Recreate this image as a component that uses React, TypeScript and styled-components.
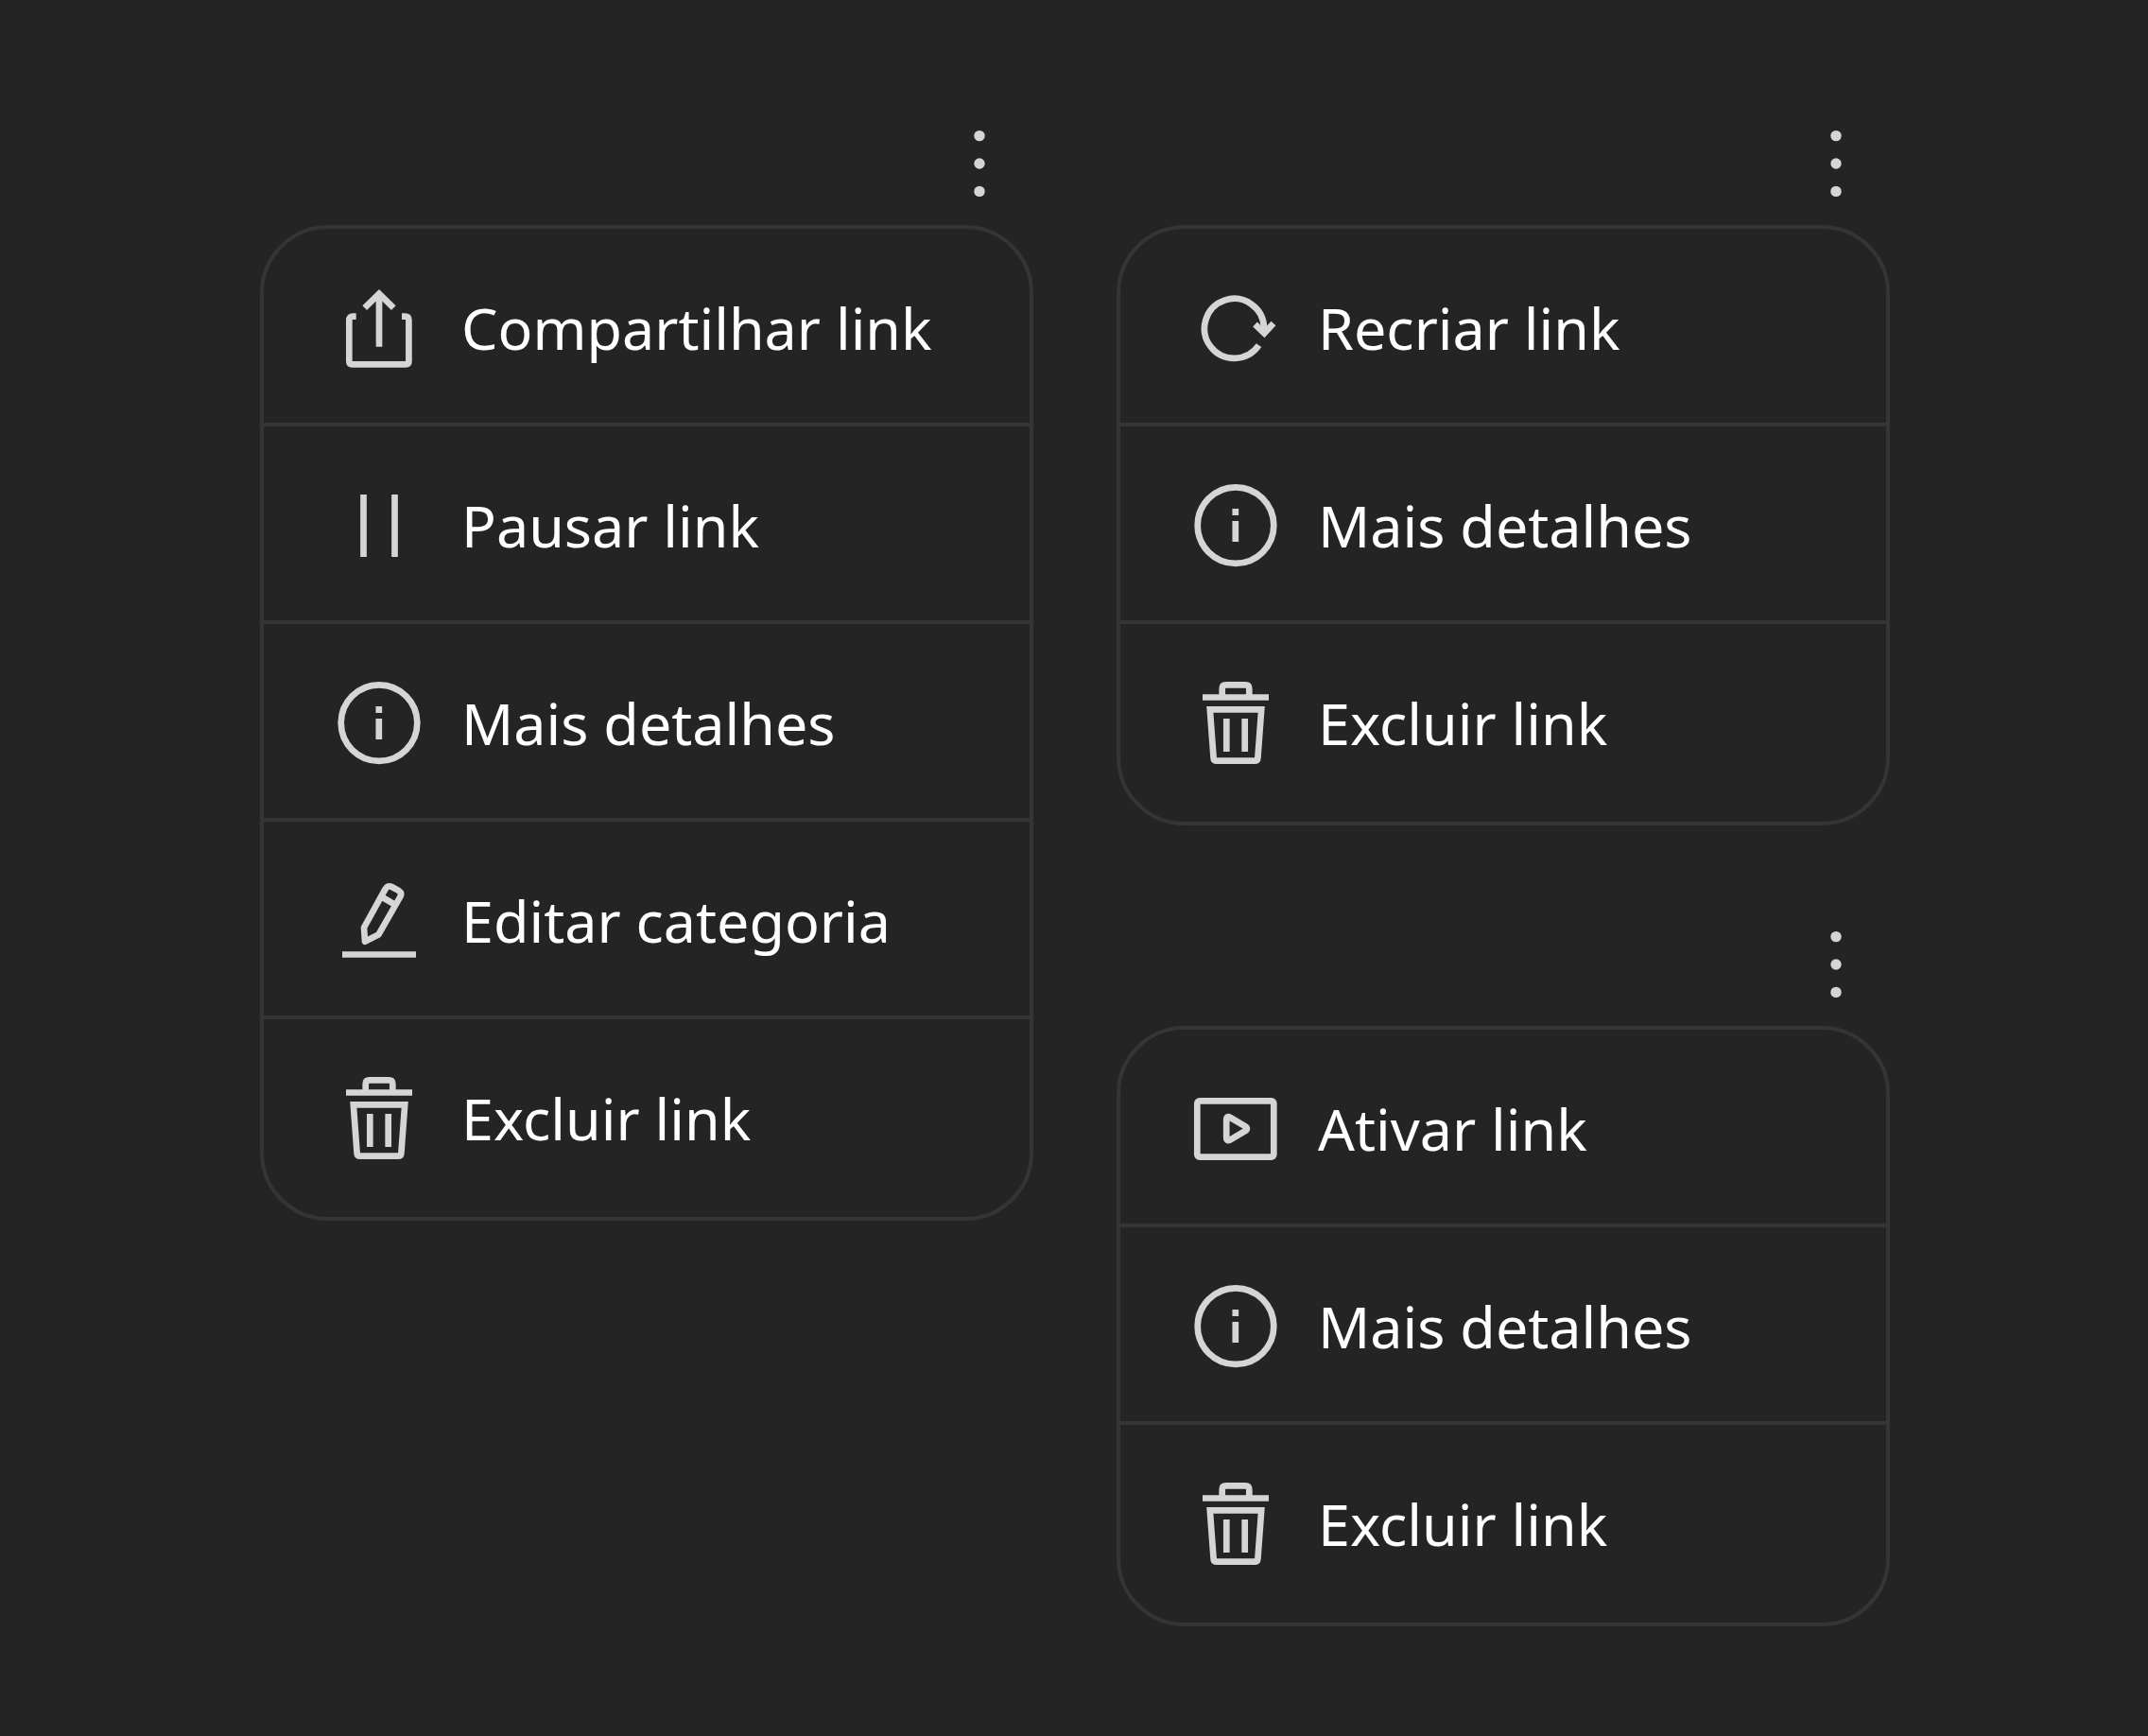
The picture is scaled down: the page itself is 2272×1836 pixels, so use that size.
import React from "react";
import styled, { createGlobalStyle } from "styled-components";

const color = {
  page: "#242424",
  line: "#353535",
  icon: "#d5d5d5",
  text: "#ffffff",
};

const GlobalStyle = createGlobalStyle`
  * {
    box-sizing: border-box;
  }

  body {
    margin: 0;
    background: ${color.page};
    color: ${color.text};
    font-family: "Noto Sans", "Open Sans", sans-serif;
  }
`;

const Page = styled.main`
  display: grid;
  grid-template-columns: repeat(2, minmax(0, 1fr));
  column-gap: 88px;
  align-items: start;
  min-height: 100vh;
  padding: 129px 273px 116px 275px;
`;

const Column = styled.div`
  display: flex;
  flex-direction: column;
  gap: 103px;
`;

const MenuGroup = styled.section`
  display: flex;
  flex-direction: column;
  gap: 21px;
`;

const KebabButton = styled.button`
  align-self: flex-end;
  display: flex;
  width: 88px;
  height: 88px;
  margin: 0 13px 0 0;
  padding: 0;
  border: 0;
  background: none;
  color: ${color.icon};
  cursor: pointer;
`;

const MenuList = styled.ul`
  margin: 0;
  padding: 0;
  list-style: none;
  border: 4px solid ${color.line};
  border-radius: 72px;
  overflow: hidden;
`;

const MenuItem = styled.li`
  &:not(:last-child) {
    box-shadow: inset 0 -4px ${color.line};
  }
`;

const MenuButton = styled.button`
  display: flex;
  align-items: center;
  gap: 34px;
  width: 100%;
  height: 209px;
  padding: 0 70px;
  border: 0;
  background: none;
  color: inherit;
  font: inherit;
  font-size: 61px;
  line-height: 79px;
  text-align: left;
  white-space: nowrap;
  cursor: pointer;
`;

const Icon = styled.svg`
  flex: none;
  width: 105px;
  height: 105px;
  fill: none;
  stroke: ${color.icon};
  stroke-width: 6.7;
`;

const icons = {
  share: (
    <>
      <path d="M27.7 40.6H24.3Q20.3 40.6 20.3 44.6V88Q20.3 91.4 23.7 91.4H80Q83.4 91.4 83.4 88V44.6Q83.4 40.6 79.4 40.6H76" />
      <path d="M52 17V72.7M36.7 31.7L52 16.6L67.3 31.7" />
    </>
  ),
  pause: <path d="M35.5 20V86M68.5 20V86" />,
  info: (
    <>
      <circle cx="52" cy="52.6" r="40.3" />
      <path d="M51.8 35V42M51.8 48V70" />
    </>
  ),
  edit: (
    <>
      <path d="M13 88.5H91" />
      <path
        strokeLinejoin="round"
        d="M36 60L58.6 19.2Q61.3 15 65.5 17L73 21.2Q76.5 23.5 74.3 27.5L51.3 67.6L37 74.7ZM55.5 28L69 35.8"
      />
    </>
  ),
  trash: (
    <>
      <path d="M17 25.5H87M37.7 24V16.5Q37.7 12.4 41.8 12.4H62.2Q66.3 12.4 66.3 16.5V24" />
      <path d="M24.8 38.4H79.2L75.4 89.5Q75.2 92.7 72 92.7H32Q28.8 92.7 28.6 89.5Z" />
      <path d="M42.3 48V83M61.7 48V83" />
    </>
  ),
  recreate: (
    <>
      <path d="M76.5 71.2A31.5 31.5 0 1 1 82 53L82.2 58" />
      <path d="M72.5 49L82.3 58.4L92 48" />
    </>
  ),
  play: (
    <>
      <rect x="11.3" y="23.3" width="81" height="59.4" rx="2.6" />
      <path d="M42.2 43.5Q42.2 38.6 46.4 41L61.6 49.9Q66.2 52.6 61.6 55.4L46.4 64.3Q42.2 66.7 42.2 61.8Z" />
    </>
  ),
};

type Action = { icon: keyof typeof icons; label: string };

const details: Action = { icon: "info", label: "Mais detalhes" };
const remove: Action = { icon: "trash", label: "Excluir link" };

const activeMenu: Action[] = [
  { icon: "share", label: "Compartilhar link" },
  { icon: "pause", label: "Pausar link" },
  details,
  { icon: "edit", label: "Editar categoria" },
  remove,
];
const expiredMenu: Action[] = [{ icon: "recreate", label: "Recriar link" }, details, remove];
const pausedMenu: Action[] = [{ icon: "play", label: "Ativar link" }, details, remove];

function LinkMenu({ actions }: { actions: Action[] }) {
  return (
    <MenuGroup>
      <KebabButton type="button" aria-label="Opções" aria-expanded="true">
        <svg width="88" height="88" viewBox="0 0 88 88" fill="currentColor" aria-hidden="true">
          <circle cx="44" cy="14.6" r="5.7" />
          <circle cx="44" cy="44" r="5.7" />
          <circle cx="44" cy="73.4" r="5.7" />
        </svg>
      </KebabButton>
      <MenuList>
        {actions.map(({ icon, label }) => (
          <MenuItem key={label}>
            <MenuButton type="button">
              <Icon viewBox="0 0 105 105" aria-hidden="true">
                {icons[icon]}
              </Icon>
              {label}
            </MenuButton>
          </MenuItem>
        ))}
      </MenuList>
    </MenuGroup>
  );
}

export default function App() {
  return (
    <>
      <GlobalStyle />
      <Page>
        <Column>
          <LinkMenu actions={activeMenu} />
        </Column>
        <Column>
          <LinkMenu actions={expiredMenu} />
          <LinkMenu actions={pausedMenu} />
        </Column>
      </Page>
    </>
  );
}
